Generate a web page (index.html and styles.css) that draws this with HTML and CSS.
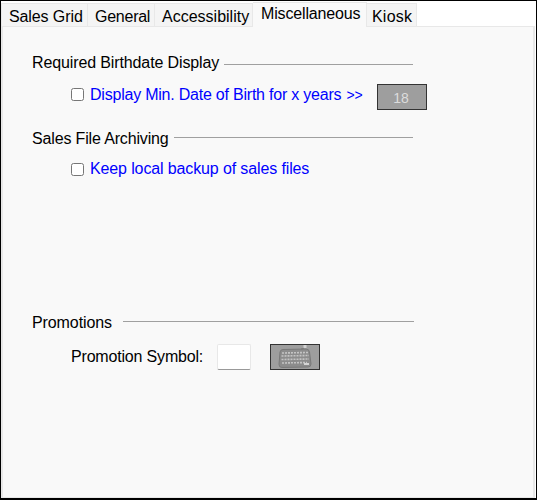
FILE: index.html
```html
<!DOCTYPE html>
<html lang="en">
<head>
<meta charset="utf-8">
<title>Miscellaneous</title>
<link rel="stylesheet" href="styles.css">
</head>
<body>
<div class="window">
  <div class="tabs">
    <div class="tab t1">Sales Grid</div>
    <div class="tab t2">General</div>
    <div class="tab t3">Accessibility</div>
    <div class="tab active">Miscellaneous</div>
    <div class="tab t5">Kiosk</div>
  </div>
  <div class="panel">
    <section class="group first">
      <div class="legend"><span class="l1">Required Birthdate Display</span><i></i></div>
      <div class="row check-row">
        <span class="box"></span>
        <span class="link">Display Min. Date of Birth for x years <small>&gt;&gt;</small></span>
        <span class="year">18</span>
      </div>
    </section>
    <section class="group second">
      <div class="legend"><span class="l2">Sales File Archiving</span><i></i></div>
      <div class="row check-row">
        <span class="box"></span>
        <span class="link backup">Keep local backup of sales files</span>
      </div>
    </section>
    <section class="group third">
      <div class="legend"><span class="l3">Promotions</span><i></i></div>
      <div class="row promo-row">
        <span class="promo-label">Promotion Symbol:</span>
        <span class="symbol"></span>
        <span class="kbd">
          <svg width="48" height="24" viewBox="0 0 48 24" fill="none">
            <path d="M12 4.500 L35 4 Q38 4 38.500 7 L40 19 Q40 22 37 22 L11 22.500 Q8 22.500 8 19.500 L9 7 Q9.500 4.500 12 4.500Z" fill="#8c8c8c" stroke="#7a7a7a"/>
            <path d="M11 8 L37 7.500 M10.500 11 L38 10.500 M10.500 14.500 L38 14 M11 18 L36 17.500" stroke="#c4c4c4" stroke-width="1.600" stroke-dasharray="2 1"/>
            <path d="M33 19 L38 19" stroke="#d4d4d4" stroke-width="2"/>
            <path d="M30 4 Q32 4 33.500 2.500" stroke="#777"/>
            <rect x="32.500" y="0" width="3" height="3" fill="#d0d0d0"/>
          </svg>
        </span>
      </div>
    </section>
  </div>
</div>
</body>
</html>
```
FILE: styles.css
```css
html, body { margin: 0; padding: 0; }
body { width: 537px; height: 500px; background: #fff; font-family: "Liberation Sans", Arial, sans-serif; font-size: 16px; color: #000; }
.window { box-sizing: border-box; width: 537px; height: 500px; border: 1px solid #000; border-bottom-width: 2px; display: flex; flex-direction: column; background: #fff; }
.tabs { display: flex; height: 25px; align-items: flex-end; box-sizing: border-box; position: relative; z-index: 1; }
.tab { box-sizing: border-box; height: 23px; padding-left: 7px; line-height: 25px; background: #f4f4f4; border: 1px solid #e8e8e8; border-bottom: 0; border-left: 0; white-space: nowrap; }
.t1 { width: 87px; letter-spacing: -0.1px; border-left: 1px solid #e8e8e8; }
.t2 { width: 67px; letter-spacing: -0.25px; }
.t3 { width: 98px; }
.t5 { width: 50px; padding-left: 5px; letter-spacing: 0.2px; }
.tab.active { width: 114px; height: 25px; margin-bottom: -1px; padding-left: 8px; line-height: 22px; background: #f9f9f9; letter-spacing: -0.15px; }
.panel { flex: 1; background: #f9f9f9; border: 1px solid #e8e8e8; border-width: 1px 2px 1px 2px; margin-right: 1px; padding-left: 29px; }
.legend { display: flex; align-items: center; height: 20px; }
.legend i { display: block; height: 1px; background: #a0a0a0; margin-left: 5px; }
.l1 { letter-spacing: -0.12px; }
.l2 { letter-spacing: -0.15px; }
.l3 { letter-spacing: -0.1px; }
.first { padding-top: 26px; }
.first .legend i { width: 189px; margin-top: 3px; }
.second { padding-top: 24px; }
.second .legend i { width: 239px; margin-top: -4px; }
.third { padding-top: 133px; }
.third .legend i { width: 291px; margin-left: 11px; margin-top: -4px; }
.row { display: flex; align-items: center; }
.check-row { padding-left: 39px; height: 22px; }
.first .check-row { margin-top: 10px; }
.second .check-row { margin-top: 9px; }
.box { box-sizing: border-box; width: 13px; height: 13px; border: 1px solid #767676; border-radius: 2.500px; background: #fff; margin-right: 6px; }
.link { color: #00f; letter-spacing: -0.22px; white-space: nowrap; }
.first .link { width: 273px; margin-top: 2px; }
.link small { font-size: 14px; letter-spacing: -0.2px; margin-left: 1px; }
.backup { letter-spacing: -0.125px; }
.year { box-sizing: border-box; width: 50px; height: 26px; margin-left: 14px; margin-top: 5px; padding-right: 2px; border: 1px solid #333; background: #9e9e9e; color: #dcdcdc; font-size: 14px; text-align: center; line-height: 26px; }
.promo-row { padding-left: 39px; margin-top: 11px; height: 26px; }
.promo-label { width: 146px; letter-spacing: -0.18px; }
.symbol { box-sizing: border-box; width: 34px; height: 26px; background: #fff; border: 1px solid #e8e8e8; border-bottom: 1px solid #999; border-radius: 2px; }
.kbd { box-sizing: border-box; width: 50px; height: 26px; margin-left: 19px; border: 1px solid #333; background: #9e9e9e; display: flex; align-items: center; justify-content: center; }
```
